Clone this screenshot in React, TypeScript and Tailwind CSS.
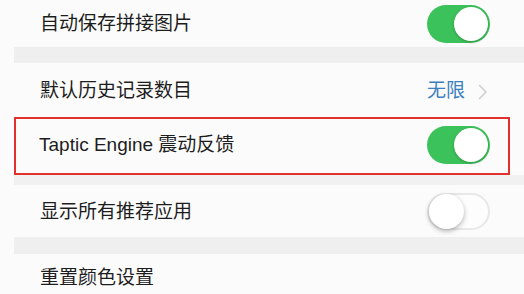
import React from 'react';

const FONT = "font-['Liberation_Sans','Noto_Sans_CJK_SC',sans-serif]";

function Toggle({ on }: { on: boolean }): React.JSX.Element {
  if (on) {
    return (
      <div className="flex h-[38px] w-[63px] shrink-0 items-center justify-end rounded-full bg-[#3cc25a] p-[2px]">
        <div className="h-[34px] w-[34px] rounded-full bg-white shadow-[0_1px_3px_rgba(0,0,0,0.25)]" />
      </div>
    );
  }
  return (
    <div className="flex h-[37px] w-[63px] shrink-0 items-center justify-start rounded-full border-2 border-[#e8e8ea] bg-[#fdfdfd]">
      <div className="h-[35px] w-[35px] rounded-full bg-white shadow-[0_2px_5px_rgba(0,0,0,0.3)]" />
    </div>
  );
}

function Chevron(): React.JSX.Element {
  return (
    <svg width="10" height="16" viewBox="0 0 10 16" fill="none" className="ml-[13px]">
      <path d="M1.5 1.5 L8 8 L1.5 14.5" stroke="#cfcfd3" strokeWidth="1.6" strokeLinecap="round" strokeLinejoin="round" />
    </svg>
  );
}

export default function App(): React.JSX.Element {
  return (
    <div className={`h-[294px] w-[524px] overflow-hidden bg-[#fbfbfb] text-[19px] text-[#1d1d1d] ${FONT}`}>
      <div className="flex h-[47px] items-center justify-between pl-[40px] pr-[34px]">
        <span className="pt-[2px]">自动保存拼接图片</span>
        <Toggle on />
      </div>
      <div className="ml-[14px] h-[16px] bg-[#efefef]" />
      <div className="flex h-[54px] items-center justify-between pl-[40px] pr-[36px]">
        <span className="pt-[3px]">默认历史记录数目</span>
        <div className="flex items-center pt-[3px]">
          <span className="text-[#3a7fc2]">无限</span>
          <Chevron />
        </div>
      </div>
      <div className="mx-[14px] flex h-[58px] items-center justify-between border-2 border-[#e2302c] pb-[3px] pl-[23px] pr-[18px]">
        <span className="pt-[2px]">Taptic Engine 震动反馈</span>
        <Toggle on />
      </div>
      <div className="ml-[14px] h-[10px] bg-[#f1f1f1]" />
      <div className="flex h-[52px] items-center justify-between pl-[40px] pr-[34px]">
        <span className="pt-[3px]">显示所有推荐应用</span>
        <Toggle on={false} />
      </div>
      <div className="ml-[14px] h-[17px] bg-[#efefef]" />
      <div className="flex h-[46px] items-center pl-[40px]">
        <span className="pt-[2px]">重置颜色设置</span>
      </div>
    </div>
  );
}
